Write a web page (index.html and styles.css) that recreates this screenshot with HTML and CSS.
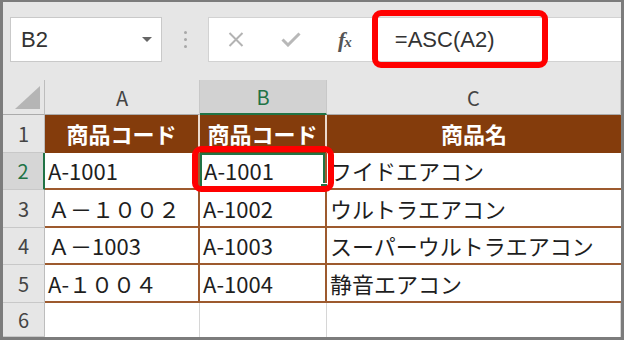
FILE: index.html
```html
<!DOCTYPE html>
<html lang="ja">
<head>
    <meta charset="UTF-8">
    <meta name="viewport" content="width=device-width, initial-scale=1.0">
    <title>ASC関数</title>
    <link rel="stylesheet" href="styles.css">
</head>
<body>
    <div class="frame">
        <div class="toolbar">
            <div class="namebox">
                <span class="cellref">B2</span>
                <span class="caret"></span>
            </div>
            <div class="grip"><i></i><i></i><i></i></div>
            <div class="fbar">
                <svg class="icon-cancel" width="16" height="15" viewBox="0 0 16 15">
                    <path d="M1.5 1 L14.5 14 M14.5 1 L1.5 14" stroke="#b3b3b3" stroke-width="2" fill="none"/>
                </svg>
                <svg class="icon-enter" width="20" height="15" viewBox="0 0 20 15">
                    <path d="M1.5 7.5 L7 13 L18.5 1.5" stroke="#b8b8b8" stroke-width="3" fill="none"/>
                </svg>
                <span class="fx">f<small>x</small></span>
                <span class="formula">=ASC(A2)</span>
                <span class="callout callout-formula"></span>
            </div>
        </div>

        <div class="sheet">
            <div class="corner">
                <svg width="25" height="23" viewBox="0 0 25 23"><path d="M0 23 L25 23 L25 0 Z" fill="#b5b5b5"/></svg>
            </div>
            <div class="colhead">A</div>
            <div class="colhead is-active">B</div>
            <div class="colhead">C</div>

            <div class="rowhead">1</div>
            <div class="cell title">商品コード</div>
            <div class="cell title">商品コード</div>
            <div class="cell title last">商品名</div>

            <div class="rowhead is-active">2</div>
            <div class="cell">A-1001</div>
            <div class="cell selected">A-1001<span class="callout callout-cell"></span></div>
            <div class="cell last">フイドエアコン</div>

            <div class="rowhead">3</div>
            <div class="cell">Ａ－１００２</div>
            <div class="cell">A-1002</div>
            <div class="cell last">ウルトラエアコン</div>

            <div class="rowhead">4</div>
            <div class="cell">Ａ－1003</div>
            <div class="cell">A-1003</div>
            <div class="cell last">スーパーウルトラエアコン</div>

            <div class="rowhead">5</div>
            <div class="cell">A-１００４</div>
            <div class="cell">A-1004</div>
            <div class="cell last">静音エアコン</div>

            <div class="rowhead">6</div>
            <div class="cell empty"></div>
            <div class="cell empty"></div>
            <div class="cell empty last"></div>
        </div>
    </div>
</body>
</html>
```

FILE: styles.css
```css
* {
    box-sizing: border-box;
}

body {
    margin: 0;
    padding: 0;
    background: #ffffff;
    font-family: "Noto Sans CJK JP", "Noto Sans", sans-serif;
}

.frame {
    width: 624px;
    height: 340px;
    border: 3px solid #7c7c7c;
    border-top-width: 2px;
    background: #e6e6e6;
    display: flex;
    flex-direction: column;
    overflow: hidden;
}

/* formula bar area */
.toolbar {
    height: 78px;
    display: flex;
    align-items: flex-start;
    padding: 15px 0 0 7px;
    flex-shrink: 0;
}

.namebox {
    width: 152px;
    height: 45px;
    background: #fff;
    border: 1px solid #c9c9c9;
    display: flex;
    align-items: center;
    justify-content: space-between;
    padding: 0 9px 0 10px;
}

.cellref {
    font-family: "Liberation Sans", Arial, sans-serif;
    font-size: 22px;
    color: #333;
}

.caret {
    width: 0;
    height: 0;
    border-left: 5px solid transparent;
    border-right: 5px solid transparent;
    border-top: 5px solid #666;
}

.grip {
    width: 6px;
    height: 45px;
    margin-left: 20px;
    display: flex;
    flex-direction: column;
    align-items: center;
    justify-content: center;
    gap: 4px;
}

.grip i {
    width: 3px;
    height: 3px;
    border-radius: 50%;
    background: #a8a8a8;
}

.fbar {
    position: relative;
    flex: 1;
    height: 45px;
    margin-left: 20px;
    background: #fff;
    border: 1px solid #d2d2d2;
    border-right: none;
    display: flex;
    align-items: center;
    padding-left: 19px;
}

.icon-enter {
    margin-left: 37px;
}

.fx {
    margin-left: 37px;
    font-family: "Liberation Serif", "Times New Roman", serif;
    font-style: italic;
    font-weight: bold;
    font-size: 22px;
    color: #555;
    letter-spacing: -1px;
}

.fx small {
    font-size: 15px;
}

.formula {
    margin-left: 44px;
    font-family: "Liberation Sans", Arial, sans-serif;
    font-size: 22px;
    color: #333;
}

.callout {
    position: absolute;
    border: 6px solid #ff0000;
    border-radius: 9px;
    pointer-events: none;
}

.callout-formula {
    left: 163px;
    top: -8px;
    width: 176px;
    height: 58px;
}

/* sheet */
.sheet {
    flex: 1;
    display: grid;
    grid-template-columns: 42px 155px 127px 1fr;
    grid-template-rows: 35px repeat(5, 37.5px) 1fr;
}

.corner {
    display: flex;
    justify-content: flex-end;
    align-items: flex-end;
    padding: 0 4px 5px 0;
    border-right: 1px solid #bdbdbd;
    border-bottom: 1px solid #ababab;
}

.colhead {
    display: flex;
    align-items: center;
    justify-content: center;
    font-size: 20px;
    color: #444;
    border-right: 1px solid #c8c8c8;
    border-bottom: 1px solid #ababab;
}

.colhead.is-active {
    background: #d2d2d2;
    color: #217346;
    border-bottom: 2px solid #217346;
}

.rowhead {
    display: flex;
    align-items: center;
    justify-content: center;
    font-size: 20px;
    color: #444;
    border-right: 1px solid #bdbdbd;
    border-bottom: 1px solid #c8c8c8;
}

.rowhead.is-active {
    background: #d6d6d6;
    color: #217346;
    border-right: 2px solid #217346;
}

.cell {
    position: relative;
    display: flex;
    align-items: center;
    padding-left: 3px;
    background: #fff;
    font-size: 22px;
    color: #1e1e1e;
    white-space: nowrap;
    border-right: 2px solid #9d5a2e;
    border-bottom: 2px solid #9d5a2e;
}

.cell.last {
    border-right: none;
}

.cell.title {
    background: #843c0c;
    color: #fff;
    font-weight: bold;
    justify-content: center;
    padding-left: 0;
    border-right-color: #ecd9cc;
    border-bottom-color: #843c0c;
}

.cell.empty {
    border-right: 1px solid #d6d6d6;
    border-bottom: none;
}

.cell.selected {
    box-shadow: inset 0 0 0 2px #217346;
    padding-left: 4px;
}

.cell.selected::after {
    content: "";
    position: absolute;
    right: -3px;
    bottom: -3px;
    width: 6px;
    height: 6px;
    background: #217346;
    border: 1px solid #fff;
}

.callout-cell {
    left: -8px;
    top: -7px;
    right: -9px;
    bottom: -4px;
    z-index: 2;
}
```
